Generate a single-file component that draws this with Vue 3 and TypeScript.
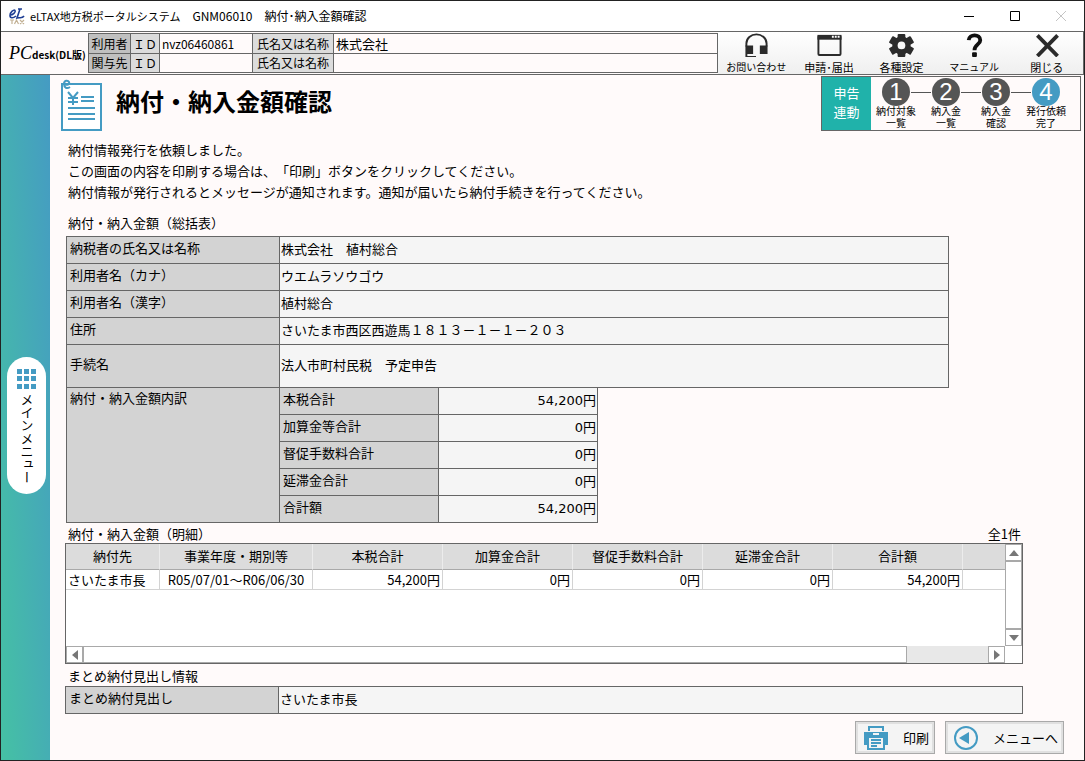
<script setup lang="ts">
interface Step {
  no: number
  lines: string[]
}
interface DetailRow {
  payee: string
  period: string
  amounts: string[]
}

const steps: Step[] = [
  { no: 1, lines: ['納付対象', '一覧'] },
  { no: 2, lines: ['納入金', '一覧'] },
  { no: 3, lines: ['納入金', '確認'] },
  { no: 4, lines: ['発行依頼', '完了'] },
]
const currentStep = 4

const messages: string[] = [
  '納付情報発行を依頼しました。',
  'この画面の内容を印刷する場合は、「印刷」ボタンをクリックしてください。',
  '納付情報が発行されるとメッセージが通知されます。通知が届いたら納付手続きを行ってください。',
]

const summary = [
  { label: '納税者の氏名又は名称', value: '株式会社　植村総合', tall: false },
  { label: '利用者名（カナ）', value: 'ウエムラソウゴウ', tall: false },
  { label: '利用者名（漢字）', value: '植村総合', tall: false },
  { label: '住所', value: 'さいたま市西区西遊馬１８１３－１－１－２０３', tall: false },
  { label: '手続名', value: '法人市町村民税　予定申告', tall: true },
]

const breakdown = [
  { label: '本税合計', value: '54,200円' },
  { label: '加算金等合計', value: '0円' },
  { label: '督促手数料合計', value: '0円' },
  { label: '延滞金合計', value: '0円' },
  { label: '合計額', value: '54,200円' },
]

const detailHeads: string[] = ['納付先', '事業年度・期別等', '本税合計', '加算金合計', '督促手数料合計', '延滞金合計', '合計額', '']
const details: DetailRow[] = [
  { payee: 'さいたま市長', period: 'R05/07/01～R06/06/30', amounts: ['54,200円', '0円', '0円', '0円', '54,200円'] },
]
</script>

<template>
  <div class="window">
    <div class="titlebar">
      <svg class="app-logo" viewBox="0 0 18 18" aria-label="eLTAX">
        <path d="M2 8C5 8 8 5 7 3.500C6 2 2 5 2 8.500C2 11.500 5 11.500 8 9M12 2C11 5 10 8 9 11C12 10 14 12 16 9M10 2h4" fill="none" stroke="#1f3f94" stroke-width="1.600" />
        <path d="M2 13h4M4 13v4M6.500 17L8.500 13L10.500 17M12 13l4 4M16 13l-4 4" fill="none" stroke="#c2b194" stroke-width="1.200" />
      </svg>
      <span class="product">eLTAX地方税ポータルシステム</span>
      <span>GNM06010</span>
      <span>納付･納入金額確認</span>
      <div class="controls">
        <button type="button" aria-label="最小化">
          <svg viewBox="0 0 12 12"><path d="M1 6.500H11" stroke="#000" /></svg>
        </button>
        <button type="button" aria-label="最大化">
          <svg viewBox="0 0 12 12"><path d="M1.500 1.500H10.500V10.500H1.500Z" stroke="#000" fill="none" /></svg>
        </button>
        <button type="button" aria-label="閉じる" disabled>
          <svg viewBox="0 0 12 12"><path d="M1 1L11 11M11 1L1 11" stroke="#c4c4c4" /></svg>
        </button>
      </div>
    </div>

    <header class="header">
      <div class="brand"><span class="brand-pc">PC</span><span class="brand-desk">desk(DL版)</span></div>
      <table class="ids">
        <tbody>
          <tr>
            <th class="who">利用者</th>
            <th class="id">ＩＤ</th>
            <td class="num">nvz06460861</td>
            <th class="name">氏名又は名称</th>
            <td class="wide">株式会社</td>
          </tr>
          <tr class="second">
            <th class="who">関与先</th>
            <th class="id">ＩＤ</th>
            <td class="num"></td>
            <th class="name">氏名又は名称</th>
            <td class="wide"></td>
          </tr>
        </tbody>
      </table>
      <nav class="toolbar">
        <button type="button">
          <svg viewBox="0 0 28 26" aria-hidden="true">
            <path d="M4 15V12A10.500 9.500 0 0 1 25 12V15" fill="none" stroke="#2b2b2b" stroke-width="2" />
            <path d="M3 14h8v9H5V25h9v1H3zM18 14h8v9h-8z" fill="#2b2b2b" />
          </svg>
          <span class="small">お問い合わせ</span>
        </button>
        <button type="button">
          <svg viewBox="0 0 28 26" aria-hidden="true">
            <rect x="3" y="4" width="23" height="20" rx="1" fill="none" stroke="#2b2b2b" stroke-width="2" />
            <path d="M2 3h25v5H2z" fill="#2b2b2b" />
            <path d="M17 4h2v2h-2zM20 4h2v2h-2zM23 4h2v2h-2z" fill="#fff" />
          </svg>
          <span>申請･届出</span>
        </button>
        <button type="button">
          <svg viewBox="0 0 28 26" aria-hidden="true">
            <g fill="#2b2b2b">
              <circle cx="14.500" cy="14" r="9.500" />
              <rect x="10.500" y="2" width="8" height="24" rx="1" />
              <rect x="10.500" y="1" width="8" height="26" rx="1" transform="rotate(60 14.500 14)" />
              <rect x="10.500" y="1" width="8" height="26" rx="1" transform="rotate(120 14.500 14)" />
            </g>
            <circle cx="14.500" cy="14" r="4" fill="#f8f8f8" />
          </svg>
          <span>各種設定</span>
        </button>
        <button type="button">
          <svg viewBox="0 0 28 26" aria-hidden="true">
            <path d="M8.500 8.500C9 1.500 20.500 2 20.500 8.500C20.500 13 14.500 13 14.500 19" fill="none" stroke="#111" stroke-width="4" />
            <rect x="12" y="21" width="5" height="5" rx="1" fill="#111" />
          </svg>
          <span class="small">マニュアル</span>
        </button>
        <button type="button">
          <svg viewBox="0 0 28 26" aria-hidden="true">
            <path d="M4 3.500L25 25M25 3.500L4 25" stroke="#2b2b2b" stroke-width="4" />
          </svg>
          <span>閉じる</span>
        </button>
      </nav>
    </header>

    <div class="body">
      <aside class="side">
        <button type="button" class="main-menu">
          <svg viewBox="0 0 19 20" aria-hidden="true">
            <path d="M0 0h5v5H0zM7 0h5v5H7zM14 0h5v5h-5zM0 7h5v5H0zM7 7h5v5H7zM14 7h5v5h-5zM0 15h5v5H0zM7 15h5v5H7zM14 15h5v5h-5z" fill="#449bc3" />
          </svg>
          <span>メインメニュー</span>
        </button>
      </aside>

      <main class="main">
        <div class="heading">
          <svg class="page-icon" viewBox="0 0 42 52" aria-hidden="true">
            <rect x="1" y="5" width="39" height="46" fill="#fff" stroke="#449bc3" stroke-width="2" />
            <path d="M3 5C6 7 9 5 8 3C7 1 3 1 3 5C3 9 6 10 9 8" fill="none" stroke="#449bc3" stroke-width="2" />
            <path d="M7 13l5 6 5-6M12 19v7M7 19h10M7 23h10M20 18h13M20 22h13M7 29h27M7 35h27M7 40h27" fill="none" stroke="#449bc3" stroke-width="2" />
          </svg>
          <h1>納付・納入金額確認</h1>
          <div class="steps">
            <div class="mode">申告<br />連動</div>
            <ol>
              <li v-for="s in steps" :key="s.no" :class="{ current: s.no === currentStep }">
                <div class="mark"><span>{{ s.no }}</span></div>
                <div v-for="l in s.lines" :key="l" class="step-line">{{ l }}</div>
              </li>
            </ol>
          </div>
        </div>

        <div class="messages">
          <p v-for="m in messages" :key="m">{{ m }}</p>
        </div>

        <h2 class="summary-title">納付・納入金額（総括表）</h2>
        <table class="form summary">
          <colgroup>
            <col class="c-label" />
            <col class="c-sub" />
            <col class="c-sub" />
            <col />
          </colgroup>
          <tbody>
            <tr v-for="r in summary" :key="r.label" :class="{ tall: r.tall }">
              <th>{{ r.label }}</th>
              <td colspan="3">{{ r.value }}</td>
            </tr>
            <tr v-for="(b, i) in breakdown" :key="b.label" class="sub">
              <th v-if="i === 0" :rowspan="breakdown.length" class="group">納付・納入金額内訳</th>
              <th>{{ b.label }}</th>
              <td class="amount">{{ b.value }}</td>
            </tr>
          </tbody>
        </table>

        <div class="detail-title">
          <h2>納付・納入金額（明細）</h2>
          <span>全1件</span>
        </div>
        <div class="grid">
          <div class="grid-view">
            <table>
              <colgroup>
                <col class="g-payee" />
                <col class="g-period" />
                <col v-for="n in 5" :key="n" class="g-amount" />
                <col />
              </colgroup>
              <thead>
                <tr>
                  <th v-for="(h, i) in detailHeads" :key="i">{{ h }}</th>
                </tr>
              </thead>
              <tbody>
                <tr v-for="d in details" :key="d.payee">
                  <td>{{ d.payee }}</td>
                  <td class="center">{{ d.period }}</td>
                  <td v-for="(a, i) in d.amounts" :key="i" class="right">{{ a }}</td>
                  <td></td>
                </tr>
              </tbody>
            </table>
          </div>
          <div class="vbar">
            <button type="button" aria-label="上へ"><svg viewBox="0 0 10 6"><path d="M0 6L5 0L10 6Z" /></svg></button>
            <div class="thumb"></div>
            <button type="button" aria-label="下へ"><svg viewBox="0 0 10 6"><path d="M0 0L5 6L10 0Z" /></svg></button>
          </div>
          <div class="hbar">
            <button type="button" aria-label="左へ"><svg viewBox="0 0 6 10"><path d="M6 0L0 5L6 10Z" /></svg></button>
            <div class="track"><div class="thumb"></div></div>
            <button type="button" aria-label="右へ"><svg viewBox="0 0 6 10"><path d="M0 0L6 5L0 10Z" /></svg></button>
          </div>
          <div class="corner"></div>
        </div>

        <h2 class="group-title">まとめ納付見出し情報</h2>
        <table class="form group-table">
          <colgroup>
            <col class="c-label" />
            <col />
          </colgroup>
          <tbody>
            <tr>
              <th>まとめ納付見出し</th>
              <td>さいたま市長</td>
            </tr>
          </tbody>
        </table>

        <div class="actions">
          <button type="button" class="print">
            <svg viewBox="0 0 26 26" aria-hidden="true">
              <path d="M5 1h16v5H5zM1 7h24v13h-3v5H4v-5H1z" fill="#449bc3" />
              <path d="M7 3h12v4H7z" fill="#f4f4f4" />
              <path d="M10 8h6v2h-6z" fill="#f4f4f4" />
              <path d="M6 13h14v10H6z" fill="#f4f4f4" />
              <path d="M8 15h10M8 18h10M8 21h6" stroke="#449bc3" stroke-width="2" />
            </svg>
            <span>印刷</span>
          </button>
          <button type="button" class="to-menu">
            <svg viewBox="0 0 26 26" aria-hidden="true">
              <circle cx="13" cy="13" r="11" fill="none" stroke="#449bc3" stroke-width="2" />
              <path d="M6 13L16 7V19Z" fill="#449bc3" />
            </svg>
            <span>メニューへ</span>
          </button>
        </div>
      </main>
    </div>
  </div>
</template>

<style>
body {
  margin: 0;
}
</style>

<style scoped>
* {
  box-sizing: border-box;
}
.window {
  min-height: 100vh;
  display: flex;
  flex-direction: column;
  border: 1px solid #222;
  background: #fffafa;
  color: #000;
  font-family: 'Noto Sans CJK JP', sans-serif;
  font-size: 13px;
  line-height: 18px;
  text-spacing-trim: space-all;
}
button {
  font: inherit;
  color: inherit;
  padding: 0;
  margin: 0;
  border: 0;
  background: none;
}
h1,
h2,
p,
ol {
  margin: 0;
  padding: 0;
  font-weight: 400;
}
h2 {
  font-size: 13px;
}
table {
  border-spacing: 0;
  table-layout: fixed;
}
th,
td {
  padding: 0;
  font-weight: 400;
  text-align: left;
  white-space: nowrap;
}

.titlebar {
  display: flex;
  align-items: center;
  gap: 12px;
  height: 30px;
  padding-left: 7px;
  background: #fff;
  font-size: 12px;
}
.app-logo {
  width: 18px;
  height: 18px;
  margin-right: -8px;
}
.product {
  font-size: 11px;
}
.controls {
  display: flex;
  margin-left: auto;
}
.controls button {
  display: flex;
  align-items: center;
  justify-content: center;
  width: 46px;
  height: 28px;
}
.controls svg {
  width: 12px;
  height: 12px;
}

.header {
  display: flex;
  height: 44px;
  border: 1px solid #666;
  border-left: 0;
}
.brand {
  display: flex;
  flex: none;
  align-items: baseline;
  width: 87px;
  padding: 9px 0 0 8px;
  white-space: nowrap;
}
.brand-pc {
  font: italic 18px/24px 'Liberation Serif', serif;
}
.brand-desk {
  font: bold 10px/24px 'Noto Sans CJK JP', sans-serif;
}
.ids {
  flex: 1;
  height: 40px;
  margin-top: 1px;
  border: solid #666;
  border-width: 1px 0 0 1px;
  font-size: 12px;
  line-height: 18px;
}
.ids th,
.ids td {
  height: 20px;
  border: solid #666;
  border-width: 0 1px 1px 0;
}
.ids .second th,
.ids .second td {
  height: 19px;
}
.ids th {
  background: #dcdcdc;
  text-align: center;
}
.ids .who {
  width: 42px;
  background: #c0c0c0;
}
.ids .id {
  width: 29px;
}
.ids .num {
  width: 93px;
  padding-left: 2px;
}
.ids .name {
  width: 81px;
}
.ids .wide {
  padding-left: 2px;
  font-size: 13px;
}
.toolbar {
  display: flex;
  flex: 0 0 365px;
  padding-left: 2px;
  background: linear-gradient(#fff, #efefef);
  font-size: 11px;
  line-height: 14px;
}
.toolbar button {
  display: flex;
  flex: 1;
  flex-direction: column;
  align-items: center;
  white-space: nowrap;
}
.toolbar svg {
  width: 28px;
  height: 26px;
  margin-bottom: 3px;
}
.toolbar .small {
  font-size: 10px;
}

.body {
  display: flex;
  flex: 1;
}
.side {
  display: flex;
  flex: none;
  flex-direction: column;
  align-items: center;
  justify-content: center;
  width: 49px;
  padding: 16px 0 0 2px;
  background: linear-gradient(to top right, #45c1a4, #459bc3);
}
.main-menu {
  display: flex;
  flex-direction: column;
  align-items: center;
  gap: 4px;
  width: 39px;
  height: 137px;
  padding-top: 12px;
  border-radius: 20px;
  background: #fff;
}
.main-menu svg {
  width: 19px;
  height: 20px;
}
.main-menu span {
  writing-mode: vertical-rl;
  font-size: 13px;
  line-height: 14px;
}

.main {
  flex: 1;
  min-width: 0;
}
.heading {
  display: flex;
  height: 64px;
  padding: 1px 3px 0 11px;
}
.page-icon {
  width: 42px;
  height: 52px;
  margin-top: 3px;
}
h1 {
  margin-left: 13px;
  font-size: 24px;
  font-weight: 700;
  line-height: 50px;
}
.steps {
  display: flex;
  height: 55px;
  margin-left: auto;
  padding-right: 9px;
  border: 1px solid #666;
}
.mode {
  width: 49px;
  padding-top: 6px;
  background: #20b2aa;
  color: #fff;
  line-height: 19px;
  text-align: center;
}
.steps ol {
  display: flex;
  list-style: none;
}
.steps li {
  width: 50px;
  padding-top: 1px;
  text-align: center;
}
.mark {
  display: flex;
  align-items: center;
  gap: 1px;
}
.mark::before,
.mark::after {
  content: '';
  flex: 1;
  height: 1px;
  background: #555;
}
li:first-child .mark::before,
li:last-child .mark::after {
  background: none;
}
.mark span {
  width: 28px;
  height: 28px;
  border-radius: 50%;
  background: #555;
  color: #fff;
  font: 24px/28px 'Liberation Sans', sans-serif;
}
.current .mark span {
  background: #449bc3;
}
.step-line {
  height: 12px;
  font: 10px/12px 'Liberation Sans', 'Noto Sans CJK JP', sans-serif;
  white-space: nowrap;
}

.messages {
  padding-left: 18px;
  line-height: 21px;
}
.summary-title {
  padding: 12px 0 4px 18px;
}
.form {
  border: solid #666;
  border-width: 1px 0 0 1px;
}
.form th,
.form td {
  height: 27px;
  border: solid #666;
  border-width: 0 1px 1px 0;
}
.form th {
  padding: 0 0 4px 3px;
  background: #d3d3d3;
}
.form td {
  padding: 0 1px 2px 1px;
  background: #f5f5f5;
}
.form .tall th,
.form .tall td {
  height: 43px;
}
.form .group {
  padding-top: 1px;
  vertical-align: top;
}
.form .sub td {
  padding-bottom: 0;
  font-family: 'DejaVu Sans', 'Noto Sans CJK JP', sans-serif;
  text-align: right;
}
.c-label {
  width: 213px;
}
.c-sub {
  width: 159px;
}
.summary {
  width: calc(100% - 151px);
  margin-left: 16px;
}

.detail-title {
  display: flex;
  justify-content: space-between;
  padding: 2px 63px 1px 18px;
}
.grid {
  display: grid;
  grid-template: 102px 17px / 1fr 17px;
  height: 121px;
  margin: -1px 61px 0 15px;
  border: 1px solid #666;
  background: #fff;
}
.grid-view {
  overflow: hidden;
}
.grid-view table {
  width: 100%;
}
.g-payee {
  width: 94px;
}
.g-period {
  width: 153px;
}
.g-amount {
  width: 130px;
}
.grid-view th {
  height: 26px;
  padding-bottom: 2px;
  border-right: 1px solid #ececec;
  border-bottom: 1px solid #a9a9a9;
  background: #dcdcdc;
  text-align: center;
}
.grid-view td {
  height: 20px;
  padding: 0 2px;
  border: solid #d3d3d3;
  border-width: 0 1px 1px 0;
}
.grid-view th:last-child,
.grid-view td:last-child {
  border-right: 0;
}
.grid-view .center {
  text-align: center;
}
.grid-view .right {
  text-align: right;
}
.vbar,
.hbar,
.track {
  display: flex;
}
.vbar {
  flex-direction: column;
}
.vbar button,
.hbar button {
  display: flex;
  flex: none;
  align-items: center;
  justify-content: center;
  width: 17px;
  height: 17px;
  border: 1px solid #a9a9a9;
  background: #fff;
}
.vbar svg {
  width: 10px;
  height: 6px;
  fill: #777;
}
.hbar svg {
  width: 6px;
  height: 10px;
  fill: #777;
}
.thumb {
  border: 1px solid #a9a9a9;
  background: #fff;
}
.vbar .thumb {
  flex: 1;
}
.track {
  flex: 1;
  background: #e8e8e8;
}
.track .thumb {
  width: 91%;
}

.group-title {
  padding: 3px 0 1px 18px;
}
.group-table {
  width: calc(100% - 76px);
  margin-left: 15px;
}
.actions {
  display: flex;
  justify-content: flex-end;
  gap: 10px;
  padding: 7px 20px 6px 0;
}
.actions button {
  display: flex;
  align-items: center;
  justify-content: space-between;
  height: 33px;
  padding: 0 5px 0 7px;
  border: 1px solid #a9a9a9;
  background: #f4f4f4;
  box-shadow: inset 0 0 0 2px #e0e0e0;
}
.actions svg {
  width: 26px;
  height: 26px;
}
.print {
  width: 80px;
}
.to-menu {
  width: 119px;
}
</style>
